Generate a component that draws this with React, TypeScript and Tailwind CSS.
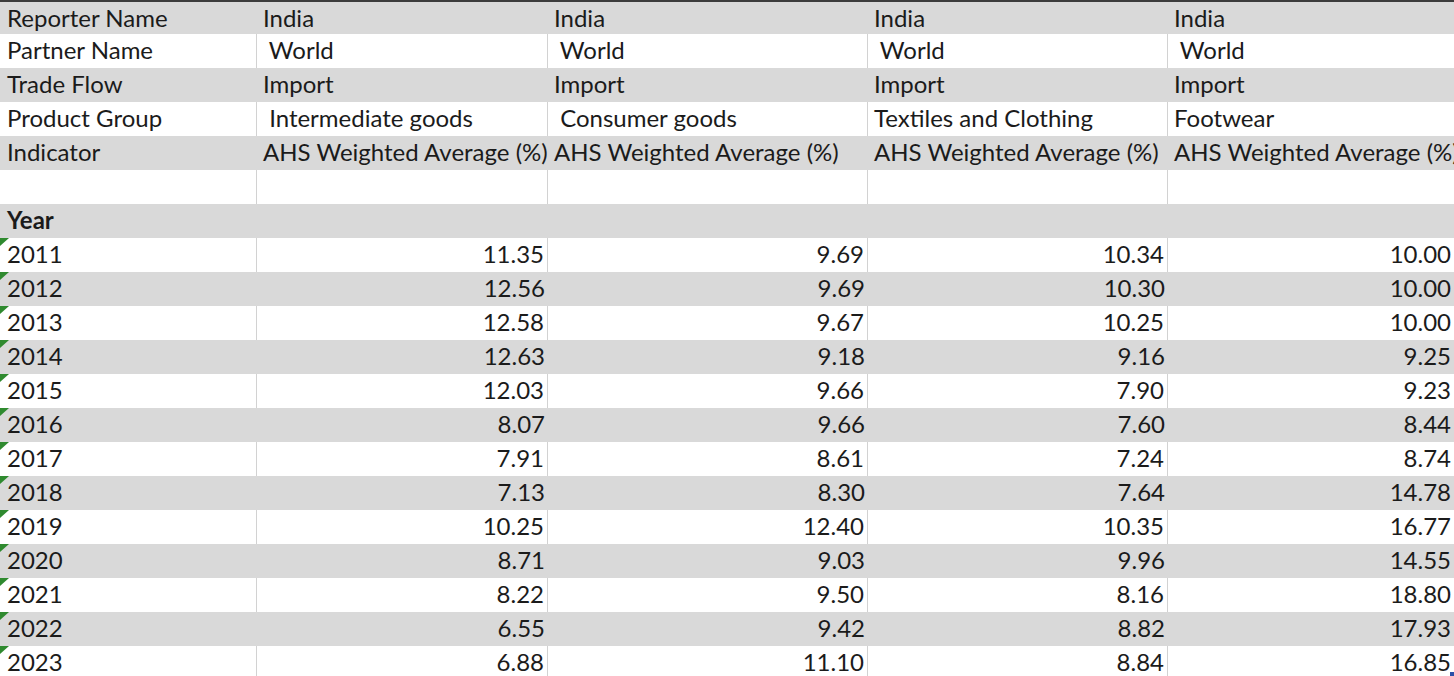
const COLS = ['w-[257px]', 'w-[291px]', 'w-[320px]', 'w-[300px]', 'w-[286px]'];

const HEADER_ROWS: string[][] = [
  ['Reporter Name', 'India', 'India', 'India', 'India'],
  ['Partner Name', ' World', ' World', ' World', ' World'],
  ['Trade Flow', 'Import', 'Import', 'Import', 'Import'],
  ['Product Group', ' Intermediate goods', ' Consumer goods', 'Textiles and Clothing', 'Footwear'],
  ['Indicator', 'AHS Weighted Average (%)', 'AHS Weighted Average (%)', 'AHS Weighted Average (%)', 'AHS Weighted Average (%)'],
  ['', '', '', '', ''],
];

const DATA: [string, string, string, string, string][] = [
  ['2011', '11.35', '9.69', '10.34', '10.00'],
  ['2012', '12.56', '9.69', '10.30', '10.00'],
  ['2013', '12.58', '9.67', '10.25', '10.00'],
  ['2014', '12.63', '9.18', '9.16', '9.25'],
  ['2015', '12.03', '9.66', '7.90', '9.23'],
  ['2016', '8.07', '9.66', '7.60', '8.44'],
  ['2017', '7.91', '8.61', '7.24', '8.74'],
  ['2018', '7.13', '8.30', '7.64', '14.78'],
  ['2019', '10.25', '12.40', '10.35', '16.77'],
  ['2020', '8.71', '9.03', '9.96', '14.55'],
  ['2021', '8.22', '9.50', '8.16', '18.80'],
  ['2022', '6.55', '9.42', '8.82', '17.93'],
  ['2023', '6.88', '11.10', '8.84', '16.85'],
];

// excel "number stored as text" marker
const GreenFlag = () => (
  <svg className="absolute left-0 top-0" width="9" height="8" viewBox="0 0 9 8">
    <path d="M0 0 H9 L0 8 Z" fill="#2f8a2f" />
  </svg>
);

const Row = ({
  cells,
  shaded,
  numeric,
  first,
  bold,
  last,
}: {
  cells: string[];
  shaded: boolean;
  numeric?: boolean;
  first?: boolean;
  bold?: boolean;
  last?: boolean;
}) => (
  <div className={`flex ${first ? 'h-[32px]' : 'h-[34px]'} ${shaded ? 'bg-[#d9d9d9]' : 'bg-white'}`}>
    {cells.map((c, i) => (
      <div
        key={i}
        className={`relative shrink-0 whitespace-pre leading-[32px] ${COLS[i]} ${
          !shaded && i < 4 ? 'border-r border-[#d2d2d2]' : ''
        } ${numeric && i > 0 ? 'pr-[3px] text-right' : 'pl-[6px]'} ${i === 0 ? 'pl-[7px]' : ''} ${
          bold ? 'font-bold' : ''
        }`}
      >
        {numeric && i === 0 && <GreenFlag />}
        {c}
        {last && i === 4 && <div className="absolute bottom-[4px] right-0 h-[4px] w-[4px] bg-[#2b4fa8]" />}
      </div>
    ))}
  </div>
);

export default function App() {
  return (
    <div
      className="h-[676px] w-[1454px] overflow-hidden bg-white text-[24px] text-[#1b1b1b]"
      style={{ fontFamily: 'Lato, "Open Sans", sans-serif' }}
    >
      <div className="h-[2px] bg-[#3c3c3c]" />
      {HEADER_ROWS.map((r, i) => (
        <Row key={i} cells={r} shaded={i % 2 === 0} first={i === 0} />
      ))}
      <Row cells={['Year', '', '', '', '']} shaded bold />
      {DATA.map((r, i) => (
        <Row key={r[0]} cells={r} shaded={i % 2 === 1} numeric last={i === DATA.length - 1} />
      ))}
    </div>
  );
}
